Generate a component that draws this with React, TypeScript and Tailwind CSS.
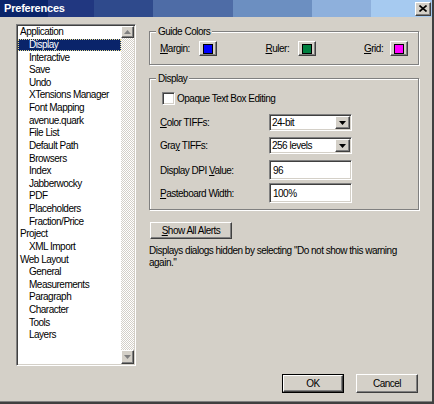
import React from "react";

const raised =
  "border border-t-white border-l-white border-r-[#404040] border-b-[#404040] shadow-[inset_-1px_-1px_0_#808080] bg-[#d4d0c8]";
const sunken =
  "border border-t-[#808080] border-l-[#808080] border-r-white border-b-white shadow-[inset_1px_1px_0_#404040,inset_-1px_-1px_0_#d4d0c8]";
const etched = "border border-[#808080] shadow-[inset_1px_1px_0_#ffffff,1px_1px_0_#ffffff]";

const items: [string, number][] = [
  ["Application", 0],
  ["Display", 1],
  ["Interactive", 1],
  ["Save", 1],
  ["Undo", 1],
  ["XTensions Manager", 1],
  ["Font Mapping", 1],
  ["avenue.quark", 1],
  ["File List", 1],
  ["Default Path", 1],
  ["Browsers", 1],
  ["Index", 1],
  ["Jabberwocky", 1],
  ["PDF", 1],
  ["Placeholders", 1],
  ["Fraction/Price", 1],
  ["Project", 0],
  ["XML Import", 1],
  ["Web Layout", 0],
  ["General", 1],
  ["Measurements", 1],
  ["Paragraph", 1],
  ["Character", 1],
  ["Tools", 1],
  ["Layers", 1],
];

function GroupBox({ label, className, children }: { label: string; className: string; children?: React.ReactNode }) {
  return (
    <div className={`relative ${etched} ${className}`}>
      <span className="absolute -top-[7px] left-[6px] px-[2px] bg-[#d4d0c8] leading-[13px]">{label}</span>
      {children}
    </div>
  );
}

function ColorBtn({ color }: { color: string }) {
  return (
    <div className={`${raised} w-[18px] h-[15px] flex items-center justify-center`}>
      <div className="w-[10px] h-[10px] border border-black" style={{ background: color }} />
    </div>
  );
}

function DownTri({ fill = "#000" }: { fill?: string }) {
  return (
    <svg width="7" height="4" viewBox="0 0 7 4">
      <path d="M0 0H7L3.5 4Z" fill={fill} />
    </svg>
  );
}

function Combo({ value }: { value: string }) {
  return (
    <div className={`${sunken} w-[83px] h-[17px] bg-white p-[1px] flex items-center`}>
      <span className="flex-1 pl-[1px] leading-[13px]">{value}</span>
      <div className={`${raised} w-[15px] h-[13px] flex items-center justify-center`}>
        <DownTri />
      </div>
    </div>
  );
}

function Field({ value }: { value: string }) {
  return (
    <div className={`${sunken} w-[83px] h-[20px] bg-white pl-[3px] flex items-center`}>
      <span className="leading-[13px]">{value}</span>
    </div>
  );
}

export default function App() {
  return (
    <div className="w-[434px] h-[404px] bg-[#d4d0c8] flex flex-col border-r-2 border-r-[#404040] text-[10px] tracking-[-0.5px] text-black font-['Liberation_Sans',Arial,sans-serif] overflow-hidden">
      {/* title bar */}
      <div className="h-[17px] flex items-center bg-[linear-gradient(to_right,#0a246a_0_48px,#213780_48px_94px,#2f4a8c_94px_153px,#4e6ca6_153px_233px,#6c8fc1_233px_312px,#8eb0dc_312px_371px,#a6caf0_371px)]">
        <span className="pl-[4px] flex-1 text-white font-bold text-[11px] tracking-[-0.2px] leading-[13px]">
          Preferences
        </span>
        <div className={`${raised} w-[16px] h-[14px] mr-[1px] flex items-center justify-center`}>
          <svg width="8" height="7" viewBox="0 0 8 7">
            <path d="M0.5 0.5L7.5 6.5M7.5 0.5L0.5 6.5" stroke="#000" strokeWidth="1.6" />
          </svg>
        </div>
      </div>

      {/* body */}
      <div className="flex-1 flex border-b-2 border-b-[#404040] shadow-[inset_0_-1px_0_#808080] pl-[16px] pt-[7px]">
        {/* listbox */}
        <div className={`${sunken} w-[120px] h-[342px] bg-white p-[1px] flex`}>
          <div className="flex-1 flex flex-col">
            {items.map(([name, lvl]) => {
              const sel = name === "Display";
              return (
                <div
                  key={name}
                  className={`h-[12.625px] flex items-center whitespace-nowrap leading-[12px] ${
                    lvl ? "pl-[11px]" : "pl-[2px]"
                  } ${sel ? "bg-[#0a246a] text-white outline outline-1 outline-dotted outline-[#e8dc8c] -outline-offset-1" : ""}`}
                >
                  {name}
                </div>
              );
            })}
          </div>
          {/* scrollbar */}
          <div className="w-[13px] flex flex-col bg-[repeating-conic-gradient(#d4d0c8_0%_25%,#ffffff_0%_50%)] bg-[length:2px_2px]">
            <div className={`${raised} h-[12px] flex items-center justify-center`}>
              <svg width="7" height="4" viewBox="0 0 7 4">
                <path d="M0 4H7L3.5 0Z" fill="#808080" />
              </svg>
            </div>
            <div className="flex-1" />
            <div className={`${raised} h-[14px] flex items-center justify-center`}>
              <DownTri fill="#808080" />
            </div>
          </div>
        </div>

        {/* right column */}
        <div className="ml-[13px] w-[270px] flex flex-col">
          <GroupBox label="Guide Colors" className="mt-[7px] h-[34px] flex items-center justify-between pl-[10px] pr-[10px] pt-[1px]">
            <div className="flex items-center">
              <span className="w-[39px]">
                <u>M</u>argin:
              </span>
              <ColorBtn color="#0000ff" />
            </div>
            <div className="flex items-center">
              <span className="w-[32px]">
                <u>R</u>uler:
              </span>
              <ColorBtn color="#008040" />
            </div>
            <div className="flex items-center">
              <span className="w-[26px]">
                <u>G</u>rid:
              </span>
              <ColorBtn color="#ff00ff" />
            </div>
          </GroupBox>

          <GroupBox label="Display" className="mt-[13px] h-[132px] pl-[12px] pt-[13px] flex flex-col">
            <div className="h-[13px] flex items-center">
              <div className={`${sunken} w-[13px] h-[13px] bg-white`} />
              <span className="ml-[2px]">Opaque Text Box Editing</span>
            </div>
            <div className="mt-[9px] h-[17px] flex items-center">
              <span className="w-[109px] -ml-[2px] pl-0">
                <u>C</u>olor TIFFs:
              </span>
              <Combo value="24-bit" />
            </div>
            <div className="mt-[6px] h-[17px] flex items-center">
              <span className="w-[109px] -ml-[2px]">
                Gra<u>y</u> TIFFs:
              </span>
              <Combo value="256 levels" />
            </div>
            <div className="mt-[6px] h-[20px] flex items-center">
              <span className="w-[109px] -ml-[2px]">
                Display DPI <u>V</u>alue:
              </span>
              <Field value="96" />
            </div>
            <div className="mt-[3px] h-[20px] flex items-center">
              <span className="w-[109px] -ml-[2px]">
                <u>P</u>asteboard Width:
              </span>
              <Field value="100%" />
            </div>
          </GroupBox>

          <div className={`${raised} mt-[12px] ml-[1px] w-[82px] h-[17px] flex items-center justify-center`}>
            <span>
              <u>S</u>how All Alerts
            </span>
          </div>
          <p className="mt-[6px] leading-[12px] pr-[10px]">
            Displays dialogs hidden by selecting "Do not show this warning again."
          </p>

          <div className="mt-auto mb-[9px] flex justify-end gap-[12px] pr-[1px]">
            <div className="border border-black w-[62px] h-[19px] flex">
              <div className={`${raised} flex-1 flex items-center justify-center`}>OK</div>
            </div>
            <div className={`${raised} w-[62px] h-[19px] flex items-center justify-center`}>Cancel</div>
          </div>
        </div>
      </div>
    </div>
  );
}
